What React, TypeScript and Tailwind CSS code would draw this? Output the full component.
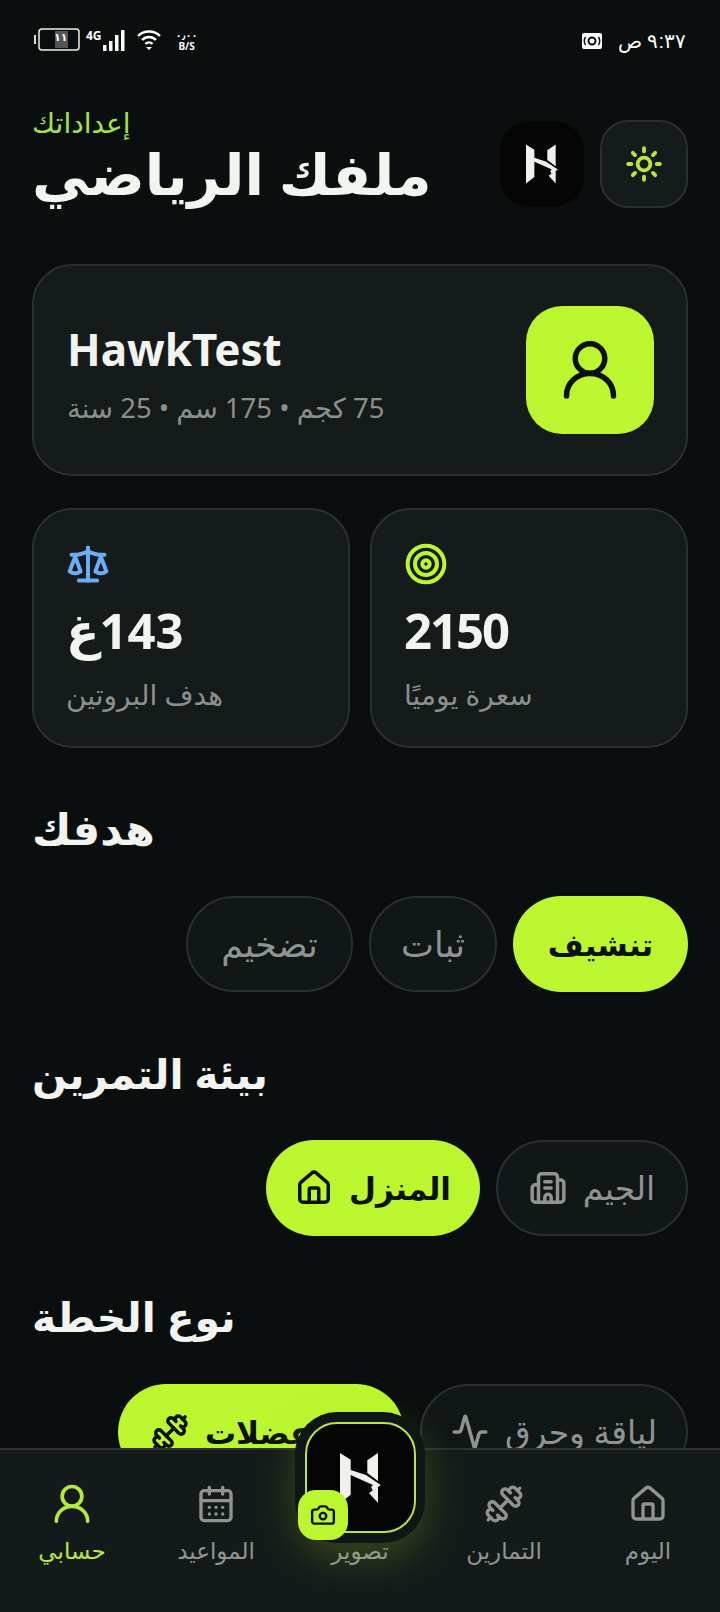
import React from "react";
import { Activity, Building2, CalendarDays, Camera, Dumbbell, House, Scale, Sun, Target } from "lucide-react";

const Logo = ({ className }: { className: string }) => (
  <svg viewBox="0 0 41 50" className={className} fill="#f2f0ec">
    <path d="M0 0l10.700 6.700V17L26 22l14.700 10-7.700 6-2-4 2-2-9-4-13.300-6v19.700L0 50z" />
    <path d="M38 0v28L27.300 20V7.300z" />
    <path d="M38 34v16l-9-10z" />
  </svg>
);

// the arch-shaped person icon, lucide's User has a different body
const Person = ({ size, color }: { size: number; color?: string }) => (
  <svg width={size} height={size} viewBox="0 0 24 24" fill="none" stroke={color ?? "currentColor"} strokeWidth={2.2} strokeLinecap="round">
    <circle cx="12" cy="7.400" r="5.900" />
    <path d="M2.600 22.400c0-5 3.900-9 9.400-9s9.400 4 9.400 9" />
  </svg>
);

const navItems = [
  { label: "اليوم", icon: House },
  { label: "التمارين", icon: Dumbbell },
  { label: "تصوير", icon: null },
  { label: "المواعيد", icon: CalendarDays },
  { label: "حسابي", icon: Person, active: true },
];

const Chip = ({ label, active, icon: Icon, className }: { label: string; active?: boolean; icon?: any; className?: string }) => (
  <div
    className={`h-[96px] rounded-full flex items-center justify-center gap-4 ${
      active
        ? "bg-[#bbf62e] text-[#0b1010] font-semibold text-[31px]"
        : `bg-[#111616] border-2 border-[#2a2f2f] text-[#8f9493] ${Icon ? "text-[33px]" : "text-[35px]"}`
    } ${className ?? ""}`}
  >
    <span>{label}</span>
    {Icon && <Icon size={38} strokeWidth={2.2} />}
  </div>
);

const StatusBar = () => (
  <div dir="ltr" className="h-[80px] px-[34px] pt-[28px] flex justify-between items-start text-white">
    <div className="flex items-center">
      <div className="relative w-[46px] h-[24px]">
        <svg width="46" height="24" viewBox="0 0 46 24">
          <rect x="0" y="7" width="2" height="9" fill="#ddd" />
          <rect x="5" y="1" width="40" height="21" rx="3" fill="none" stroke="#eee" strokeWidth="1.500" />
          <rect x="21" y="3" width="13" height="17" fill="#555" />
        </svg>
        <span className="absolute left-[20px] top-[2px] text-[11px] leading-[14px] font-bold">١١</span>
      </div>
      <span className="text-[12px] font-bold ml-[6px] -mt-[8px]">4G</span>
      <svg width="22" height="22" viewBox="0 0 22 22" fill="white" className="ml-[1px]">
        <rect x="0" y="16" width="3.500" height="6" />
        <rect x="6" y="12" width="3.500" height="10" />
        <rect x="12" y="6" width="3.500" height="16" />
        <rect x="18" y="1" width="3.500" height="21" />
      </svg>
      <svg width="26" height="22" viewBox="0 0 26 22" fill="none" stroke="white" strokeWidth="2.400" className="ml-[11px]">
        <path d="M2 7c6-6 16-6 22 0M6 11c4-4 10-4 14 0M9.500 15c2-2 5-2 7 0" />
        <path d="M13 21l-3-3h6z" fill="white" stroke="none" />
      </svg>
      <div className="ml-[14px] flex flex-col items-center leading-none text-[10px] font-bold">
        <span>٠٫٠٠</span>
        <span className="mt-[1px]">B/S</span>
      </div>
    </div>
    <div className="flex items-center gap-[16px] mt-[3px]">
      <svg width="20" height="16" viewBox="0 0 20 16">
        <rect width="20" height="16" rx="2" fill="white" />
        <circle cx="10" cy="8" r="3.500" fill="none" stroke="#0a0e0e" strokeWidth="2" />
        <path d="M3.500 4c-1.500 2.500-1.500 5.500 0 8M16.500 4c1.500 2.500 1.500 5.500 0 8" fill="none" stroke="#0a0e0e" strokeWidth="1.500" />
      </svg>
      <span dir="rtl" className="text-[20px] leading-none font-['Liberation_Sans']">٩:٣٧ ص</span>
    </div>
  </div>
);

export default function App() {
  return (
    <div dir="rtl" className="relative h-[1612px] w-[720px] overflow-hidden bg-[#0a0e0e] font-['Noto_Sans','DejaVu_Sans',sans-serif] text-[#f2f4f0]">
      <StatusBar />

      <div className="px-[32px]">
        {/* Header */}
        <div className="flex items-start gap-4 mt-[40px] h-[88px]">
          <div className="w-[88px] h-[88px] shrink-0 rounded-[28px] bg-[#151a1a] border-2 border-[#2a2f2f] flex items-center justify-center">
            <Sun size={38} color="#b5ea3c" strokeWidth={2.400} />
          </div>
          <div className="w-[84px] h-[84px] shrink-0 mt-[2px] rounded-[28px] bg-[#050505] flex items-center justify-center">
            <Logo className="w-[32px] h-[40px]" />
          </div>
          <div className="flex-1 text-left -mt-[12px]">
            <div className="text-[28px] leading-[28px] text-[#a6e34a]">إعداداتك</div>
            <div className="text-[57px] leading-[74px] font-bold whitespace-nowrap">ملفك الرياضي</div>
          </div>
        </div>

        {/* Profile */}
        <div className="mt-[56px] h-[212px] rounded-[40px] bg-[#151a1a] border-2 border-[#2a2f2f] flex items-center justify-between pr-[32px] pl-[33px]">
          <div className="w-[128px] h-[128px] rounded-[36px] bg-[#bbf62e] flex items-center justify-center">
            <Person size={60} color="#0b1010" />
          </div>
          <div className="text-left pt-[9px]">
            <div dir="ltr" className="text-[44px] leading-[56px] font-bold">HawkTest</div>
            <div className="text-[27.500px] leading-[40px] text-[#8b908f] mt-[11px]">75 كجم • 175 سم • 25 سنة</div>
          </div>
        </div>

        {/* Stats */}
        <div className="mt-[32px] grid grid-cols-2 gap-[20px]">
          {[
            { value: "2150", label: "سعرة يوميًا", icon: <Target size={44} color="#bbf62e" strokeWidth={2.200} /> },
            { value: "143غ", label: "هدف البروتين", icon: <Scale size={44} color="#69aef5" strokeWidth={2.200} /> },
          ].map((s) => (
            <div key={s.label} className="h-[240px] rounded-[40px] bg-[#151a1a] border-2 border-[#2a2f2f] px-[32px] pt-[32px] flex flex-col items-end">
              {s.icon}
              <div className="text-[49px] leading-[64px] font-bold tracking-[-2px] mt-[12px]">{s.value}</div>
              <div className="text-[28px] leading-[36px] text-[#8b908f] mt-[14px]">{s.label}</div>
            </div>
          ))}
        </div>

        <h2 className="mt-[53px] text-[43px] leading-[56px] font-bold text-left">هدفك</h2>
        <div className="mt-[39px] flex gap-4">
          <Chip label="تنشيف" active className="w-[175px]" />
          <Chip label="ثبات" className="w-[128px]" />
          <Chip label="تضخيم" className="w-[167px]" />
        </div>

        <h2 className="mt-[53px] text-[41px] leading-[56px] font-bold text-left">بيئة التمرين</h2>
        <div className="mt-[39px] flex gap-4">
          <Chip label="الجيم" icon={Building2} className="w-[192px]" />
          <Chip label="المنزل" icon={House} active className="w-[214px]" />
        </div>

        <h2 className="mt-[52px] text-[41px] leading-[56px] font-bold text-left">نوع الخطة</h2>
        <div className="mt-[40px] flex gap-4">
          <Chip label="لياقة وحرق" icon={Activity} className="w-[268px]" />
          <Chip label="بناء عضلات" icon={Dumbbell} active className="w-[286px]" />
        </div>
      </div>

      {/* Bottom nav */}
      <div className="absolute bottom-0 left-0 right-0 h-[164px] bg-[#141a1a] border-t-2 border-[#2a2f2f] flex">
        {navItems.map((item) => {
          const Icon = item.icon as any;
          return (
            <div key={item.label} className={`flex-1 flex flex-col items-center pt-[34px] ${item.active ? "text-[#b5ea3c]" : "text-[#8f9493]"}`}>
              <div className="h-[40px]">{Icon && <Icon size={40} strokeWidth={2} />}</div>
              <div className="text-[23px] leading-[28px] mt-[12px]">{item.label}</div>
            </div>
          );
        })}
      </div>

      {/* Center camera button */}
      <div className="absolute left-[295px] top-[1412px] w-[130px] h-[131px] rounded-[42px] bg-[#101515] flex items-center justify-center shadow-[0_14px_40px_rgba(187,246,46,0.22)]">
        <div className="w-[111px] h-[111px] rounded-[32px] bg-[#050505] border-2 border-[#b5ea3c] flex items-center justify-center">
          <Logo className="w-[41px] h-[50px]" />
        </div>
        <div className="absolute left-[3px] top-[78px] w-[50px] h-[50px] rounded-[18px] bg-[#bbf62e] flex items-center justify-center">
          <Camera size={26} color="#0b1010" strokeWidth={2.200} />
        </div>
      </div>
    </div>
  );
}
